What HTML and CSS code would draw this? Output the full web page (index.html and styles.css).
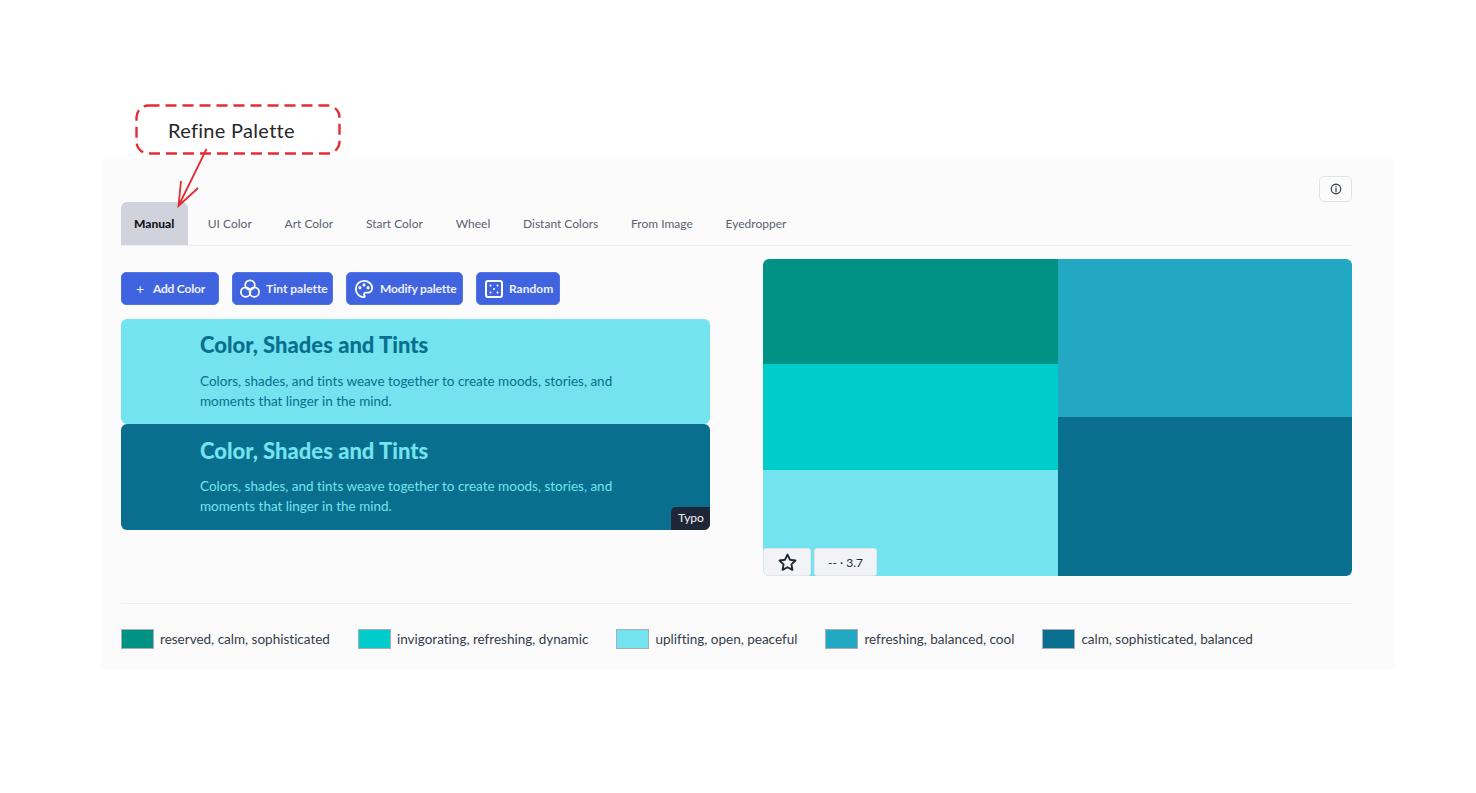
FILE: index.html
```html
<!DOCTYPE html>
<html lang="en">
<head>
  <meta charset="UTF-8">
  <title>Refine Palette</title>
  <meta name="viewport" content="width=device-width, initial-scale=1.0">
  <link rel="stylesheet" href="styles.css">
</head>
<body>
  <!-- annotation over the page -->
  <div class="callout">
    <svg class="callout-art" width="220" height="120" viewBox="130 100 220 120" fill="none" stroke="#e42c33" stroke-width="2.400">
      <rect x="136.500" y="105.500" width="203" height="48" rx="12" stroke-dasharray="11 6"/>
      <path d="M206.500 149 L178.500 206 M181 181 L178.500 206 L198 188" stroke-width="1.800"/>
    </svg>
    <span class="callout-text">Refine Palette</span>
  </div>

  <main class="panel">
    <div class="panel-top">
      <button class="info-btn" aria-label="Info">
        <svg width="12" height="12" viewBox="0 0 24 24" fill="none" stroke="#3f4654" stroke-width="2.600" stroke-linecap="round"><circle cx="12" cy="12" r="9.500"/><path d="M12 11v6M12 7.500v.1"/></svg>
      </button>
    </div>

    <nav class="tabs">
      <a class="tab active">Manual</a>
      <a class="tab">UI Color</a>
      <a class="tab">Art Color</a>
      <a class="tab">Start Color</a>
      <a class="tab">Wheel</a>
      <a class="tab">Distant Colors</a>
      <a class="tab">From Image</a>
      <a class="tab">Eyedropper</a>
    </nav>

    <div class="columns">
      <section class="left">
        <div class="actions">
          <button class="btn btn-add"><span class="plus">+</span>Add Color</button>
          <button class="btn btn-tint">
            <svg width="20" height="20" viewBox="0.500 1 23 23" fill="none" stroke="#fff" stroke-width="2"><circle cx="12" cy="8" r="5.500"/><circle cx="7" cy="16" r="5.500"/><circle cx="17" cy="16" r="5.500"/></svg>
            Tint palette
          </button>
          <button class="btn btn-modify">
            <svg width="20" height="20" viewBox="1 1 22 22" fill="none" stroke="#fff" stroke-width="2" stroke-linecap="round" stroke-linejoin="round"><path d="M12 21a9 9 0 0 1 0-18c5 0 9 3.600 9 8a5 5 0 0 1-5 5h-2a2 2 0 0 0-1 3.750A1.300 1.300 0 0 1 12 21"/><circle cx="7.500" cy="10.500" r=".7"/><circle cx="12" cy="7.500" r=".7"/><circle cx="16.500" cy="10.500" r=".7"/></svg>
            Modify palette
          </button>
          <button class="btn btn-random">
            <svg width="18" height="18" viewBox="3 3 18 18" fill="none" stroke="#fff" stroke-width="2" stroke-linecap="round" stroke-linejoin="round"><rect x="4" y="4" width="16" height="16" rx="2"/><path d="M8.500 8.500v.01M15.500 8.500v.01M12 12v.01M8.500 15.500v.01M15.500 15.500v.01"/></svg>
            Random
          </button>
        </div>

        <div class="preview">
          <div class="card card-light">
            <h2>Color, Shades and Tints</h2>
            <p>Colors, shades, and tints weave together to create moods, stories, and moments that linger in the mind.</p>
          </div>
          <div class="card card-dark">
            <h2>Color, Shades and Tints</h2>
            <p>Colors, shades, and tints weave together to create moods, stories, and moments that linger in the mind.</p>
          </div>
          <span class="typo-tag">Typo</span>
        </div>
      </section>

      <section class="palette">
        <div class="palette-col palette-col-three">
          <div class="c1"></div>
          <div class="c2"></div>
          <div class="c3"></div>
        </div>
        <div class="palette-col palette-col-two">
          <div class="c4"></div>
          <div class="c5"></div>
        </div>
        <div class="palette-tools">
          <button class="tool star-btn" aria-label="Favourite">
            <svg width="21" height="21" viewBox="0 0 24 24" fill="none" stroke="#1f2937" stroke-width="2.200" stroke-linejoin="round"><path d="M12 3l2.800 5.800 6.300.9-4.600 4.400 1.100 6.300L12 17.400l-5.600 3 1.100-6.300L2.900 9.700l6.300-.9z"/></svg>
          </button>
          <button class="tool score-btn">-- · 3.7</button>
        </div>
      </section>
    </div>

    <hr class="divider">

    <ul class="legend">
      <li><i class="swatch c1"></i>reserved, calm, sophisticated</li>
      <li><i class="swatch c2"></i>invigorating, refreshing, dynamic</li>
      <li><i class="swatch c3"></i>uplifting, open, peaceful</li>
      <li><i class="swatch c4"></i>refreshing, balanced, cool</li>
      <li><i class="swatch c5"></i>calm, sophisticated, balanced</li>
    </ul>
  </main>
</body>
</html>
```

FILE: styles.css
```css
* {
  box-sizing: border-box;
}

body {
  margin: 0;
  height: 793px;
  padding: 159px 81px 0 101px;
  background: #fff;
  color: #1f2937;
  font-family: "Lato", "Noto Sans", sans-serif;
  font-variant-ligatures: none;
  overflow: hidden;
}

button {
  font-family: inherit;
  font-variant-ligatures: none;
  cursor: pointer;
}

.callout {
  position: absolute;
  left: 130px;
  top: 100px;
  width: 220px;
  height: 120px;
  z-index: 2;
  pointer-events: none;
}

.callout-art {
  display: block;
}

.callout-text {
  position: absolute;
  left: 38px;
  top: 18px;
  font-size: 20px;
  line-height: 24px;
  letter-spacing: 0.3px;
  color: #27272a;
}

.panel {
  height: 510px;
  padding: 17px 43px 0 20px;
  background: #fbfbfc;
}

.panel-top {
  display: flex;
  justify-content: flex-end;
  height: 26px;
}

.info-btn {
  display: flex;
  align-items: center;
  justify-content: center;
  width: 33px;
  height: 26px;
  padding: 0;
  background: #fbfbfc;
  border: 1px solid #e2e3e8;
  border-radius: 5px;
}

.tabs {
  display: flex;
  gap: 6.800px;
  height: 44px;
  border-bottom: 1px solid #eeeef2;
}

.tab {
  display: flex;
  align-items: center;
  padding: 0 13px;
  font-size: 12px;
  color: #5b6270;
  border-radius: 6px 6px 0 0;
}

.tab.active {
  width: 67px;
  background: #d1d3dc;
  color: #14141f;
  font-weight: 900;
}

.columns {
  display: flex;
  gap: 53px;
  margin-top: 13px;
}

.left,
.palette {
  width: 589px;
}

.actions {
  display: flex;
  gap: 13px;
  margin-top: 13px;
}

.btn {
  display: flex;
  align-items: center;
  height: 33px;
  padding: 0 0 0 7px;
  gap: 6px;
  background: #4064e0;
  color: #eef1fd;
  border: 1px solid #5374e4;
  border-radius: 5px;
  font-size: 12px;
  font-weight: 700;
  white-space: nowrap;
}

.btn svg {
  flex: none;
}

.btn-add {
  width: 98px;
  padding-left: 14px;
  gap: 9px;
  letter-spacing: -0.2px;
}

.btn-tint {
  width: 101px;
}

.btn-modify {
  width: 117px;
  letter-spacing: -0.15px;
}

.btn-random {
  width: 84px;
  padding-left: 8px;
}

.plus {
  font-size: 14px;
  font-weight: 400;
}

.preview {
  position: relative;
  margin-top: 14px;
}

.card {
  height: 106px;
  padding: 13px 90px 0 79px;
  border-radius: 6px;
}

.card-light {
  height: 105px;
  padding-top: 12px;
  background: #72e3ef;
  color: #0a6f8e;
}

.card-light p {
  margin-top: 12px;
}

.card-dark {
  background: #0a6f8e;
  color: #72e3ef;
}

.card h2 {
  margin: 0;
  font-size: 22px;
  line-height: 28px;
  font-weight: 900;
}

.card p {
  margin: 11px 0 0;
  font-size: 13.500px;
  line-height: 20px;
}

.card-light p {
  margin-top: 12px;
}

.typo-tag {
  position: absolute;
  right: 0;
  bottom: 0;
  width: 39px;
  height: 23px;
  padding-left: 1px;
  background: #1e2638;
  color: #f3f4f6;
  font-size: 12px;
  line-height: 22px;
  text-align: center;
  border-radius: 5px 0 6px 0;
}

.palette {
  position: relative;
  display: flex;
  height: 317px;
  border-radius: 6px;
  overflow: hidden;
}

.palette-col {
  flex: 1;
  display: grid;
}

.palette-col-three {
  grid-template-rows: 105px 106px 1fr;
}

.palette-col-two {
  grid-template-rows: 158px 1fr;
}

.c1 {
  background: #009385;
}

.c2 {
  background: #00cccc;
}

.c3 {
  background: #72e3ef;
}

.c4 {
  background: #22a8c2;
}

.c5 {
  background: #0a6f8e;
}

.palette-tools {
  position: absolute;
  left: 0;
  bottom: 0;
  display: flex;
  gap: 3px;
}

.tool {
  display: flex;
  align-items: center;
  justify-content: center;
  height: 28px;
  padding: 0;
  background: #f2f3f6;
  border: 1px solid #e4e5ea;
  border-radius: 3px;
  color: #1f2937;
  font-size: 12px;
}

.star-btn {
  width: 48px;
}

.score-btn {
  width: 63px;
}

.divider {
  margin: 27px 0 0;
  border: 0;
  border-top: 1px solid #eeeef2;
}

.legend {
  display: flex;
  gap: 28px;
  margin: 25px 0 0;
  padding: 0;
  list-style: none;
}

.legend li {
  display: flex;
  align-items: center;
  gap: 6px;
  height: 20px;
  font-size: 13.500px;
  line-height: 18px;
  color: #343b49;
  white-space: nowrap;
}

.swatch {
  width: 33px;
  height: 20px;
  border: 1px solid #a9adbb;
}
```
